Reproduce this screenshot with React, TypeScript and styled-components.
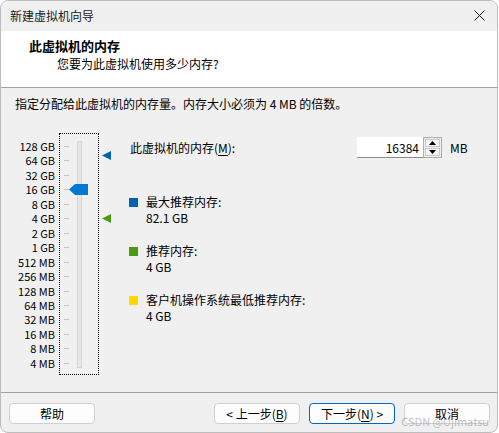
import React from "react"
import styled, { createGlobalStyle } from "styled-components"

const GlobalStyle = createGlobalStyle`
  html, body {
    margin: 0;
    padding: 0;
    background: #ffffff;
  }
  body {
    font-family: "Noto Sans CJK SC", "Noto Sans", sans-serif;
    font-size: 12px;
    color: #000;
  }
`

const FONT = `"Noto Sans CJK SC", "Noto Sans", sans-serif`

// scale: 128 GB (2^17 MB) at top, 4 MB (2^2 MB) at bottom
const TOP_EXP = 17
const ROW_STEP = 217 / 15

const rowOffset = (mb: number) => (TOP_EXP - Math.log2(mb)) * ROW_STEP

const Window = styled.div`
  position: relative;
  width: 498px;
  height: 433px;
  box-sizing: border-box;
  border: 1px solid #bdbdbd;
  border-radius: 8px;
  overflow: hidden;
  background: #f0f0f0;
  display: flex;
  flex-direction: column;
`

const TitleBar = styled.div`
  height: 30px;
  display: flex;
  align-items: center;
  justify-content: space-between;
  padding: 0 8px 0 9px;
  background: #f0f0f0;
`

const TitleText = styled.span`
  font-size: 12px;
  line-height: 16px;
  color: #1a1a1a;
`

const CloseButton = styled.div`
  width: 20px;
  height: 20px;
  display: flex;
  align-items: center;
  justify-content: center;
  margin-top: -1px;
`

const Header = styled.div`
  height: 57px;
  box-sizing: border-box;
  background: #ffffff;
  border-bottom: 1px solid #a0a0a0;
  padding: 6px 0 0 28px;
`

const HeaderTitle = styled.div`
  font-size: 13px;
  font-weight: 700;
  line-height: 18px;
`

const HeaderSub = styled.div`
  font-size: 12px;
  line-height: 16px;
  padding-left: 28px;
  margin-top: 1px;
`

const Body = styled.div`
  flex: 1;
  padding: 8px 0 0 14px;
`

const Instruction = styled.div`
  font-size: 12px;
  line-height: 16px;
`

const Main = styled.div`
  display: flex;
  align-items: flex-start;
  margin-top: 21px;
`

const ScaleLabels = styled.div`
  width: 40px;
  height: 229px;
  margin-top: 7px;
  margin-right: 4px;
  display: flex;
  flex-direction: column;
  justify-content: space-between;
  align-items: flex-end;
`

const ScaleLabel = styled.span`
  font-size: 11px;
  line-height: 12px;
  white-space: nowrap;
  color: #000;
`

const SliderBox = styled.div`
  position: relative;
  width: 40px;
  height: 242px;
  box-sizing: border-box;
  border: 1px dotted #000;
  display: flex;
  align-items: flex-start;
  padding-left: 4px;
`

const Ticks = styled.div`
  width: 5px;
  height: 218px;
  margin-top: 12px;
  display: flex;
  flex-direction: column;
  justify-content: space-between;
`

const Tick = styled.div`
  width: 5px;
  height: 1px;
  background: #c4c4c4;
`

const Track = styled.div`
  width: 5px;
  height: 227px;
  margin-top: 7px;
  margin-left: 8px;
  box-sizing: border-box;
  border: 1px solid #d6d6d6;
  background: #e7e7e7;
`

const Thumb = styled.svg`
  position: absolute;
  left: 9px;
  width: 19px;
  height: 11px;
`

const Markers = styled.div`
  position: relative;
  width: 9px;
  height: 242px;
  margin-left: 3px;
`

const Marker = styled.svg`
  position: absolute;
  left: 0;
  width: 9px;
  height: 9px;
`

const Info = styled.div`
  display: flex;
  flex-direction: column;
  padding-top: 4px;
  margin-left: 19px;
`

const MemRow = styled.div`
  display: flex;
  align-items: center;
  height: 21px;
`

const MemLabel = styled.span`
  width: 227px;
  line-height: 16px;
`

const Underline = styled.span`
  text-decoration: underline;
  text-underline-offset: 2px;
`

const SpinInput = styled.div`
  width: 66px;
  height: 21px;
  box-sizing: border-box;
  background: #ffffff;
  border-bottom: 1px solid #8a8a8a;
  display: flex;
  align-items: center;
  justify-content: flex-end;
  padding-right: 4px;
  font-size: 12px;
`

const SpinButtons = styled.div`
  width: 19px;
  height: 21px;
  box-sizing: border-box;
  border: 1px solid #adadad;
  display: flex;
  flex-direction: column;
  gap: 1px;
  padding: 1px;
  background: #f0f0f0;
`

const SpinHalf = styled.div`
  flex: 1;
  box-sizing: border-box;
  border: 1px solid #c9c9c9;
  background: #f6f6f6;
  display: flex;
  align-items: center;
  justify-content: center;
`

const Unit = styled.span`
  margin-left: 8px;
  line-height: 16px;
`

const Legend = styled.div`
  display: flex;
  flex-direction: column;
  gap: 17px;
  margin-top: 36px;
`

const LegendItem = styled.div`
  display: flex;
  align-items: flex-start;
  margin-left: -1px;
`

const Swatch = styled.div<{ $color: string }>`
  width: 9px;
  height: 9px;
  margin-top: 4px;
  margin-right: 8px;
  background: ${(p) => p.$color};
`

const LegendText = styled.div`
  display: flex;
  flex-direction: column;
  line-height: 16px;
`

const Footer = styled.div`
  height: 40px;
  box-sizing: border-box;
  border-top: 1px solid #a0a0a0;
  padding: 10px 7px 0 8px;
  display: flex;
  align-items: flex-start;
`

const Spacer = styled.div`
  flex: 1;
`

const Button = styled.div<{ $primary?: boolean }>`
  width: 86px;
  height: 21px;
  box-sizing: border-box;
  border: 1px solid ${(p) => (p.$primary ? "#0067c0" : "#d0d0d0")};
  border-radius: 4px;
  background: #fdfdfd;
  display: flex;
  align-items: center;
  justify-content: center;
  font-size: 12px;
  line-height: 16px;
  color: #000;
  & + & {
    margin-left: 9px;
  }
`

const Watermark = styled.div`
  position: absolute;
  right: 8px;
  bottom: 5px;
  font-family: ${FONT};
  font-size: 11px;
  line-height: 12px;
  color: rgba(150, 150, 150, 0.6);
  pointer-events: none;
`

const scale = [
  "128 GB", "64 GB", "32 GB", "16 GB", "8 GB", "4 GB", "2 GB", "1 GB",
  "512 MB", "256 MB", "128 MB", "64 MB", "32 MB", "16 MB", "8 MB", "4 MB",
]

const memory = 16384
const maxRecommended = 82.1 * 1024
const recommended = 4096

const legend = [
  { color: "#0063b1", label: "最大推荐内存:", value: "82.1 GB" },
  { color: "#4c9a0f", label: "推荐内存:", value: "4 GB" },
  { color: "#ffd800", label: "客户机操作系统最低推荐内存:", value: "4 GB" },
]

export default function App() {
  return (
    <>
      <GlobalStyle />
      <Window>
        <TitleBar>
          <TitleText>新建虚拟机向导</TitleText>
          <CloseButton>
            <svg width="11" height="11" viewBox="0 0 11 11">
              <path d="M0.5 0.5 L10.5 10.5 M10.5 0.5 L0.5 10.5" stroke="#1a1a1a" strokeWidth="1" />
            </svg>
          </CloseButton>
        </TitleBar>

        <Header>
          <HeaderTitle>此虚拟机的内存</HeaderTitle>
          <HeaderSub>您要为此虚拟机使用多少内存?</HeaderSub>
        </Header>

        <Body>
          <Instruction>指定分配给此虚拟机的内存量。内存大小必须为 4 MB 的倍数。</Instruction>
          <Main>
            <ScaleLabels>
              {scale.map((s) => (
                <ScaleLabel key={s}>{s}</ScaleLabel>
              ))}
            </ScaleLabels>

            <SliderBox>
              <Ticks>
                {scale.map((s) => (
                  <Tick key={s} />
                ))}
              </Ticks>
              <Track />
              <Thumb viewBox="0 0 19 11" style={{ top: 12 + rowOffset(memory) - 5 }}>
                <polygon points="0,5.5 6,0 19,0 19,11 6,11" fill="#0078d4" />
              </Thumb>
            </SliderBox>

            <Markers>
              <Marker viewBox="0 0 9 9" style={{ top: 13 + rowOffset(maxRecommended) - 4.5 }}>
                <polygon points="0,4.5 9,0 9,9" fill="#0063b1" />
              </Marker>
              <Marker viewBox="0 0 9 9" style={{ top: 13 + rowOffset(recommended) - 4.5 }}>
                <polygon points="0,4.5 9,0 9,9" fill="#4c9a0f" />
              </Marker>
            </Markers>

            <Info>
              <MemRow>
                <MemLabel>
                  此虚拟机的内存(<Underline>M</Underline>):
                </MemLabel>
                <SpinInput>{memory}</SpinInput>
                <SpinButtons>
                  <SpinHalf>
                    <svg width="7" height="4" viewBox="0 0 7 4">
                      <polygon points="3.5,0 7,4 0,4" fill="#000" />
                    </svg>
                  </SpinHalf>
                  <SpinHalf>
                    <svg width="7" height="4" viewBox="0 0 7 4">
                      <polygon points="0,0 7,0 3.5,4" fill="#000" />
                    </svg>
                  </SpinHalf>
                </SpinButtons>
                <Unit>MB</Unit>
              </MemRow>

              <Legend>
                {legend.map((l) => (
                  <LegendItem key={l.label}>
                    <Swatch $color={l.color} />
                    <LegendText>
                      <span>{l.label}</span>
                      <span>{l.value}</span>
                    </LegendText>
                  </LegendItem>
                ))}
              </Legend>
            </Info>
          </Main>
        </Body>

        <Footer>
          <Button>帮助</Button>
          <Spacer />
          <Button>
            &lt; 上一步(<Underline>B</Underline>)
          </Button>
          <Button $primary>
            下一步(<Underline>N</Underline>) &gt;
          </Button>
          <Button>取消</Button>
        </Footer>

        <Watermark>CSDN @Ujimatsu</Watermark>
      </Window>
    </>
  )
}
